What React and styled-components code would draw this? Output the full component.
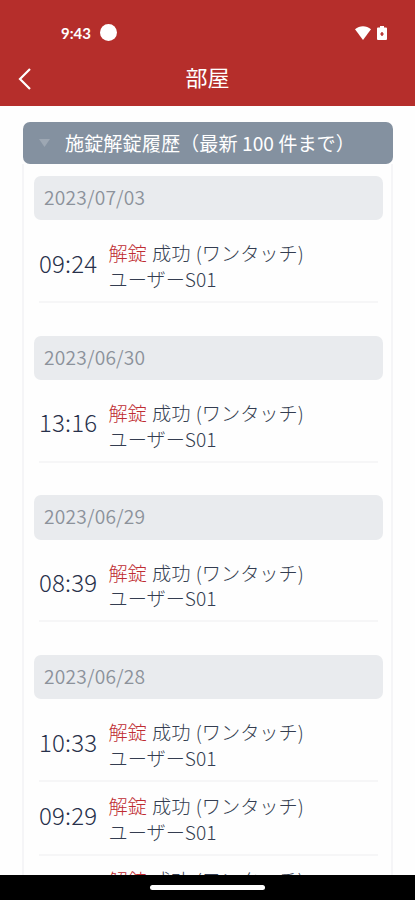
import styled, { createGlobalStyle } from 'styled-components'

const groups = [
  { date: '2023/07/03', times: ['09:24'] },
  { date: '2023/06/30', times: ['13:16'] },
  { date: '2023/06/29', times: ['08:39'] },
  { date: '2023/06/28', times: ['10:33', '09:29', ''] },
]

const App = () => {
  return (
    <Screen>
      <GlobalStyle />
      <StatusBar>
        <Clock>9:43</Clock>
        <Dot />
        <StatusIcons>
          <svg width='16' height='14' viewBox='0 0 16 14'>
            <path d='M0 3.2C4.6-.9 11.4-.9 16 3.2L8 14Z' fill='#fff' />
          </svg>
          <svg width='10' height='14' viewBox='0 0 10 14'>
            <path d='M3 0h4v1.400h2a1 1 0 0 1 1 1V13a1 1 0 0 1-1 1H1a1 1 0 0 1-1-1V2.400a1 1 0 0 1 1-1h2Z' fill='#fff' />
            <path d='M5 6v4M3.400 8h3.200' stroke='#b52e2b' strokeWidth='1.400' />
          </svg>
        </StatusIcons>
      </StatusBar>
      <TitleBar>
        <BackButton aria-label='戻る'>
          <svg width='14' height='22' viewBox='0 0 14 22'>
            <path d='M12 1 2 11l10 10' fill='none' stroke='#fff' strokeWidth='2.200' />
          </svg>
        </BackButton>
        <Title>部屋</Title>
      </TitleBar>
      <Content>
        <PanelHeader>
          <svg width='11' height='8' viewBox='0 0 11 8'>
            <path d='M0 0h11L5.500 8Z' fill='#9da7b3' />
          </svg>
          <PanelTitle>施錠解錠履歴（最新 100 件まで）</PanelTitle>
        </PanelHeader>
        <Panel>
          {groups.map(({ date, times }) => (
            <Group key={date}>
              <DateLabel>{date}</DateLabel>
              {times.map((time, index) => (
                <Row key={index}>
                  <Time>{time}</Time>
                  <Detail>
                    <div><Action>解錠</Action> 成功 (ワンタッチ)</div>
                    <div>ユーザーS01</div>
                  </Detail>
                </Row>
              ))}
            </Group>
          ))}
        </Panel>
      </Content>
      <NavBar>
        <Handle />
      </NavBar>
    </Screen>
  )
}

export default App

const GlobalStyle = createGlobalStyle`
  * {
    box-sizing: border-box;
  }

  body {
    margin: 0;
    background: #fefefe;
    font-family: 'Noto Sans CJK JP', sans-serif;
  }

  svg {
    display: block;
  }
`

const Screen = styled.div`
  display: flex;
  flex-direction: column;
  height: 900px;
  overflow: hidden;
  background: #fefefe;
`

const StatusBar = styled.div`
  display: flex;
  flex: none;
  align-items: center;
  height: 53px;
  padding: 12px 28px 0 61px;
  background: #b52e2b;
`

const Clock = styled.span`
  width: 39px;
  color: #fff;
  font-family: Lato, sans-serif;
  font-size: 15px;
  font-weight: 700;
  line-height: 18px;
`

const Dot = styled.span`
  width: 17px;
  height: 17px;
  border-radius: 50%;
  background: #fff;
`

const StatusIcons = styled.div`
  display: flex;
  align-items: center;
  gap: 6px;
  margin-left: auto;
`

const TitleBar = styled.header`
  display: grid;
  grid-template-columns: 60px 1fr 60px;
  flex: none;
  align-items: center;
  height: 53px;
  background: #b52e2b;
`

const BackButton = styled.button`
  display: flex;
  padding: 0 0 1px 18px;
  border: 0;
  background: none;
`

const Title = styled.h1`
  margin: 0;
  padding-bottom: 7px;
  color: #fff;
  font-size: 22px;
  font-weight: 400;
  line-height: 32px;
  text-align: center;
`

const Content = styled.main`
  display: flex;
  flex: 1;
  flex-direction: column;
  min-height: 0;
  padding: 16px 22px 0;
  overflow: hidden;
`

const PanelHeader = styled.div`
  display: flex;
  flex: none;
  align-items: center;
  gap: 15px;
  height: 42px;
  margin-left: 1px;
  padding-left: 16px;
  border-radius: 7px;
  background: #8491a0;
`

const PanelTitle = styled.h2`
  margin: 0;
  color: #fff;
  font-size: 19.2px;
  font-weight: 400;
  line-height: 28px;
  white-space: nowrap;
`

const Panel = styled.div`
  flex: none;
  padding: 12px 8px 0 10px;
  border: solid #f5f5f7;
  border-width: 0 2px;
`

const Group = styled.section`
  margin-bottom: 32.8px;
`

const DateLabel = styled.div`
  height: 44.2px;
  margin-bottom: 9px;
  padding-left: 10px;
  border-radius: 7px;
  background: #e9ebee;
  color: #8c929b;
  font-size: 19.2px;
  font-weight: 350;
  letter-spacing: 0.2px;
  line-height: 42px;
`

const Row = styled.div`
  display: flex;
  align-items: center;
  height: 73.7px;
  margin: 0 5px;
  border-bottom: 2px solid #f6f6f7;
`

const Time = styled.div`
  width: 69.500px;
  padding-bottom: 5px;
  color: #27304a;
  font-size: 24px;
  font-weight: 300;
  letter-spacing: 0.2px;
  line-height: 32px;
`

const Detail = styled.div`
  padding-top: 4px;
  color: #343d50;
  font-size: 19.2px;
  font-weight: 300;
  line-height: 25.6px;
  white-space: nowrap;
  word-spacing: 1px;
`

const Action = styled.span`
  color: #bf2c32;
`

const NavBar = styled.footer`
  display: flex;
  flex: none;
  justify-content: center;
  height: 25px;
  padding-top: 10px;
  background: #000;
`

const Handle = styled.div`
  width: 115px;
  height: 5px;
  border-radius: 3px;
  background: #fff;
`
